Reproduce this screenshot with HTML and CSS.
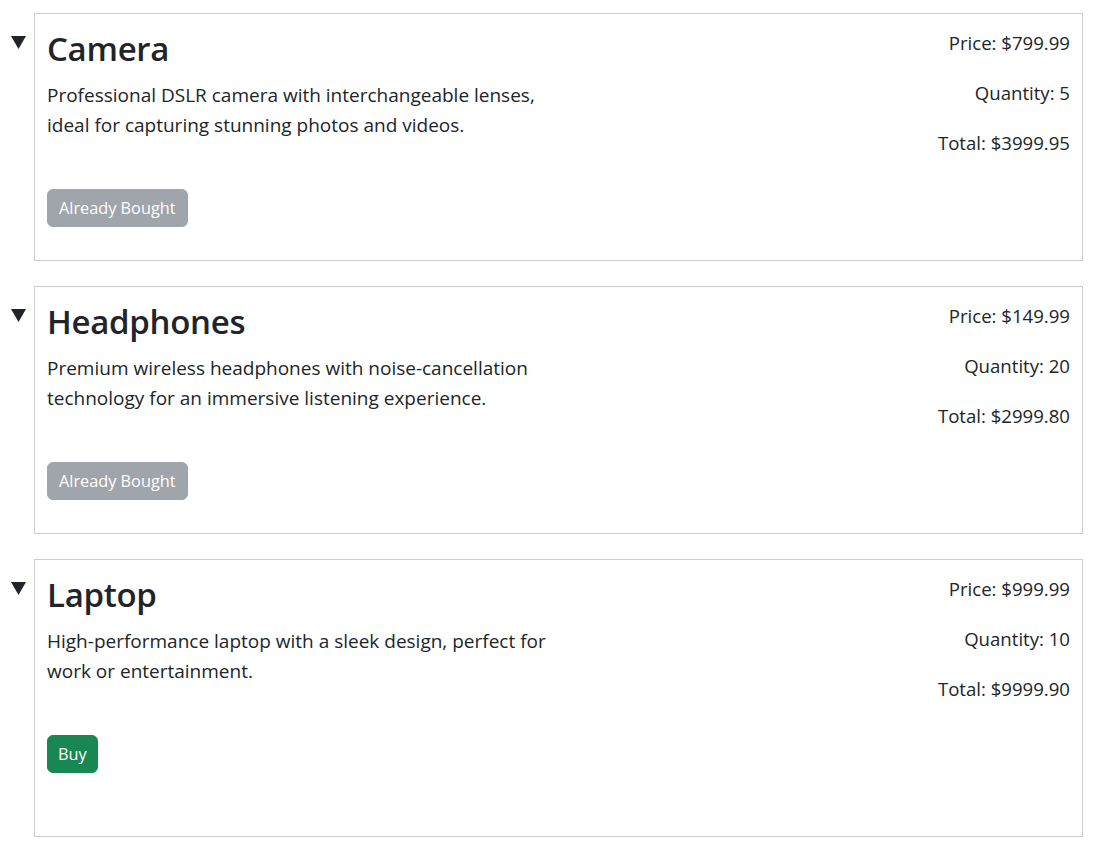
FILE: index.html
```html
<!DOCTYPE html>
<html lang="en">
<head>
<meta charset="utf-8">
<title>Products</title>
<link rel="stylesheet" href="styles.css">
</head>
<body>
<ul class="products">
  <li class="product">
    <span class="marker"><svg width="15" height="13" viewBox="0 0 15 13"><polygon points="0,0 15,0 7.5,13" fill="#212529"/></svg></span>
    <div class="card">
      <div class="info">
        <h2 class="title">Camera</h2>
        <p class="desc">Professional DSLR camera with interchangeable lenses, ideal for capturing stunning photos and videos.</p>
        <button class="btn btn-bought" disabled>Already Bought</button>
      </div>
      <div class="stats">
        <p>Price: $799.99</p>
        <p>Quantity: 5</p>
        <p>Total: $3999.95</p>
      </div>
    </div>
  </li>
  <li class="product">
    <span class="marker"><svg width="15" height="13" viewBox="0 0 15 13"><polygon points="0,0 15,0 7.5,13" fill="#212529"/></svg></span>
    <div class="card">
      <div class="info">
        <h2 class="title">Headphones</h2>
        <p class="desc">Premium wireless headphones with noise-cancellation technology for an immersive listening experience.</p>
        <button class="btn btn-bought" disabled>Already Bought</button>
      </div>
      <div class="stats">
        <p>Price: $149.99</p>
        <p>Quantity: 20</p>
        <p>Total: $2999.80</p>
      </div>
    </div>
  </li>
  <li class="product">
    <span class="marker"><svg width="15" height="13" viewBox="0 0 15 13"><polygon points="0,0 15,0 7.5,13" fill="#212529"/></svg></span>
    <div class="card">
      <div class="info">
        <h2 class="title">Laptop</h2>
        <p class="desc">High-performance laptop with a sleek design, perfect for work or entertainment.</p>
        <button class="btn btn-buy">Buy</button>
        <div class="spacer"></div>
      </div>
      <div class="stats">
        <p>Price: $999.99</p>
        <p>Quantity: 10</p>
        <p>Total: $9999.90</p>
      </div>
    </div>
  </li>
</ul>
</body>
</html>
```
FILE: styles.css
```css
html, body {
  margin: 0;
  padding: 0;
  background: #fff;
}
body {
  font-family: "Open Sans", "Noto Sans", sans-serif;
  color: #212529;
  font-size: 16px;
}
.products {
  list-style: none;
  margin: 0;
  padding: 13px 13px 0 0;
  display: flex;
  flex-direction: column;
  gap: 25px;
}
.product {
  display: flex;
  align-items: flex-start;
}
.marker {
  width: 34px;
  flex: none;
  padding: 23px 0 0 11px;
  box-sizing: border-box;
  line-height: 0;
}
.card {
  flex: 1;
  display: flex;
  justify-content: space-between;
  align-items: flex-start;
  border: 1px solid #cccccc;
  padding: 12px;
}
.info {
  width: 512px;
  display: flex;
  flex-direction: column;
  align-items: flex-start;
}
.title {
  font-size: 33px;
  font-weight: 600;
  line-height: 41px;
  margin: 2px 0 11px;
  letter-spacing: -0.3px;
}
.desc {
  font-size: 19px;
  line-height: 30px;
  margin: 0 0 49px;
}
.btn {
  font-family: inherit;
  font-size: 16.3px;
  line-height: 24px;
  padding: 6px 11px;
  border: 1px solid transparent;
  border-radius: 6px;
  color: #fff;
  margin-bottom: 21px;
}
.btn-buy {
  padding: 6px 10px;
}
.btn-bought {
  background: #9fa5aa;
  border-color: #9fa5aa;
}
.btn-buy {
  background: #198754;
  border-color: #198754;
}
.spacer {
  height: 30px;
}
.stats {
  text-align: right;
  padding-top: 2px;
}
.stats p {
  font-size: 18.6px;
  line-height: 30px;
  margin: 0 0 20px;
}
```
